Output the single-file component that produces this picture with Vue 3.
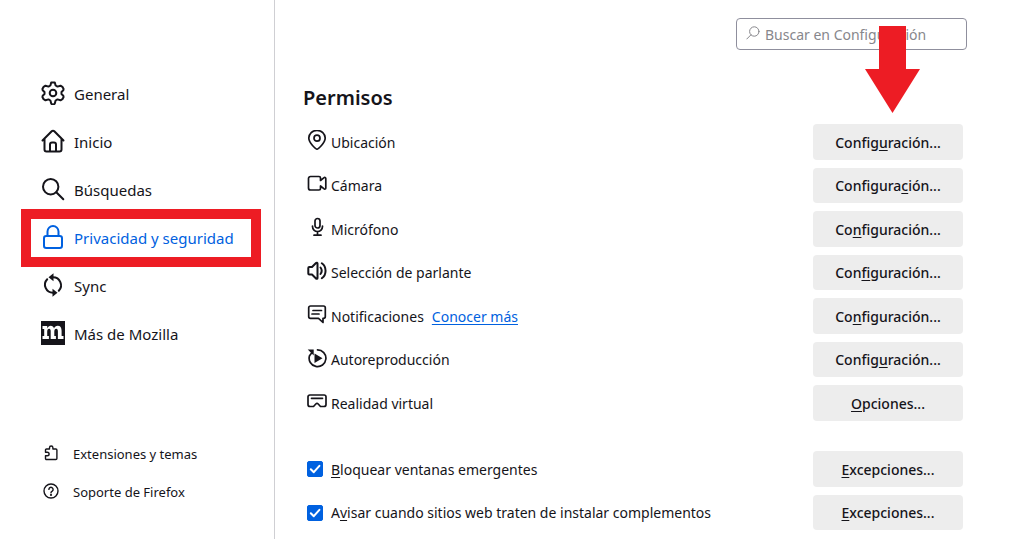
<script setup>
import { ref } from 'vue'

const categories = [
  { id: 'general', label: 'General' },
  { id: 'home', label: 'Inicio' },
  { id: 'search', label: 'Búsquedas' },
  { id: 'privacy', label: 'Privacidad y seguridad' },
  { id: 'sync', label: 'Sync' },
  { id: 'mozilla', label: 'Más de Mozilla' },
]
const selected = ref('privacy')
const query = ref('')

// Each button text is split around its underlined access key.
const permissions = [
  { id: 'location', label: 'Ubicación', button: ['Config', 'u', 'ración...'] },
  { id: 'camera', label: 'Cámara', button: ['Configura', 'c', 'ión...'] },
  { id: 'microphone', label: 'Micrófono', button: ['Co', 'n', 'figuración...'] },
  { id: 'speaker', label: 'Selección de parlante', button: ['Con', 'f', 'iguración...'] },
  { id: 'notifications', label: 'Notificaciones', link: 'Conocer más', button: ['Co', 'n', 'figuración...'] },
  { id: 'autoplay', label: 'Autoreproducción', button: ['Config', 'u', 'ración...'] },
  { id: 'xr', label: 'Realidad virtual', button: ['', 'O', 'pciones...'] },
]

const blockers = ref([
  { id: 'popups', label: ['', 'B', 'loquear ventanas emergentes'], on: true },
  { id: 'addons', label: ['A', 'v', 'isar cuando sitios web traten de instalar complementos'], on: true },
])
</script>

<template>
  <div class="page">
    <aside class="sidebar">
      <nav class="categories" aria-label="Categorías">
        <button
          v-for="c in categories"
          :key="c.id"
          type="button"
          class="category"
          :class="{ selected: selected === c.id }"
          @click="selected = c.id"
        >
          <svg class="category-icon" viewBox="0 0 24 24" aria-hidden="true">
            <g v-if="c.id === 'general'">
              <path d="M10.2 1.5h3.6l.8 3 1.9 1.1 3-.9 1.9 1.1 1.2 2.1-.3 1.4-1.8 1.7v2l1.8 1.7.3 1.4-1.2 2.1-1.9 1.1-3-.9-1.9 1.1-.8 3-1 1h-1.600l-1-1-.8-3-1.900-1.100-3 .9-1.900-1.100-1.200-2.100.3-1.400 1.800-1.700v-2L1.700 9.300l-.3-1.400 1.200-2.100 1.900-1.100 3 .9 1.900-1.100z" />
              <circle cx="12" cy="12" r="3.300" />
            </g>
            <g v-else-if="c.id === 'home'">
              <path d="M1.500 11.500 10.700 2.200a1.800 1.800 0 0 1 2.600 0l9.200 9.300M3.500 10v10.500a2 2 0 0 0 2 2h13a2 2 0 0 0 2-2V10" />
              <path d="M9 22v-6.500a2 2 0 0 1 2-2h2a2 2 0 0 1 2 2V22" />
            </g>
            <g v-else-if="c.id === 'search'">
              <circle cx="9.700" cy="9.700" r="7.700" />
              <path d="m15.300 15.300 7 7" />
            </g>
            <g v-else-if="c.id === 'privacy'">
              <path d="M6.500 11V6.500a5.500 5.500 0 0 1 11 0V11" />
              <rect x="3" y="11" width="18" height="12" rx="2.200" />
            </g>
            <g v-else-if="c.id === 'sync'">
              <path d="M12 4.200a8 8 0 0 1 5.800 13.500M12 19.800A8 8 0 0 1 6.200 6.300" />
              <path class="head" d="M12.500.3v8L7.500 4.300zM11.500 15.700v8l5-4z" />
            </g>
            <g v-else>
              <path class="tile" d="M0 0h24v24H0z" />
              <path class="mark" transform="translate(0 -3.300) scale(1 1.200)" d="M1.500 7h4.700v1.900C7 7.400 8.200 6.700 9.700 6.700c1.700 0 2.800.8 3.300 2.300.7-1.500 2-2.300 3.700-2.300 2.600 0 3.900 1.500 3.900 4.200v4.300h1.900v2.500h-5.600v-6.200c0-1.500-.5-2.200-1.600-2.200-1.300 0-2 .9-2 2.500v3.400h1.600v2.500H9.700v-6.200c0-1.500-.5-2.200-1.500-2.200-1.300 0-2 .9-2 2.500v3.400h1.700v2.500H1.500v-2.500h1.700V9.500H1.500z" />
            </g>
          </svg>
          <span>{{ c.label }}</span>
        </button>
      </nav>

      <footer class="extras">
        <a class="extra" href="#extensiones">
          <svg class="extra-icon" viewBox="0 0 16 16" aria-hidden="true">
            <path d="M2.500 6.500V5a1 1 0 0 1 1-1h3V2.700a1.700 1.700 0 0 1 3.400 0V4h3a1 1 0 0 1 1 1v8.500a1 1 0 0 1-1 1H3.500a1 1 0 0 1-1-1v-2.700h1.800a1.800 1.800 0 0 0 0-3.600H2.500z" />
          </svg>
          <span>Extensiones y temas</span>
        </a>
        <a class="extra" href="#soporte">
          <svg class="extra-icon" viewBox="0 0 16 16" aria-hidden="true">
            <circle cx="8" cy="8" r="7" />
            <path d="M5.900 6.400a2.100 2.100 0 1 1 3.300 1.700C8.400 8.600 8 8.900 8 9.800" />
            <circle class="solid" cx="8" cy="11.900" r=".4" />
          </svg>
          <span>Soporte de Firefox</span>
        </a>
      </footer>
    </aside>

    <main class="content">
      <div class="search-row">
        <label class="search">
          <svg class="search-icon" viewBox="0 0 14 14" aria-hidden="true">
            <circle cx="8.300" cy="5.500" r="4.700" />
            <path d="M4.900 8.900.8 13" />
          </svg>
          <input v-model="query" type="text" placeholder="Buscar en Configuración" aria-label="Buscar en Configuración" />
        </label>
        <svg class="arrow" viewBox="0 0 55 87" aria-hidden="true">
          <path d="M14 0h27v43h14L27.500 87 0 43h14z" />
        </svg>
      </div>

      <h2>Permisos</h2>

      <section class="rows" aria-label="Permisos">
        <div v-for="p in permissions" :key="p.id" class="row">
          <svg class="row-icon" viewBox="0 0 20 20" aria-hidden="true">
            <g v-if="p.id === 'location'">
              <path d="M10 19.200c-1 0-8.200-6.200-8.200-11.100a8.200 7.700 0 0 1 16.400 0c0 4.900-7.200 11.100-8.200 11.100z" />
              <circle cx="10" cy="8.200" r="3" />
            </g>
            <g v-else-if="p.id === 'camera'">
              <path d="M3.500 2.500h8.500A1.500 1.500 0 0 1 13.500 4v2.500l3.300-2.700c.9-.7 2-.3 2 .8v9.300c0 1.100-1.100 1.500-2 .8L13.500 12v2.500A1.500 1.500 0 0 1 12 16H3.500a2 2 0 0 1-2-2V4.500a2 2 0 0 1 2-2z" />
            </g>
            <g v-else-if="p.id === 'microphone'">
              <rect x="8" y="1.500" width="5" height="9.500" rx="2.500" />
              <path d="M5.500 9v.5a5 5 0 0 0 10 0V9M10.500 14.500V18M7 18.200h7" />
            </g>
            <g v-else-if="p.id === 'speaker'" class="heavy">
              <path d="M1.300 7v5.500a1 1 0 0 0 1 1H5l4 4c.6.6 1.500.3 1.500-.6V2.600c0-.9-.9-1.200-1.500-.6L5 6H2.300a1 1 0 0 0-1 1z" />
              <path d="M13.500 6.500c1.500 2 1.500 4.500 0 6.500M14.800 2.200c5 3.500 5 11.600 0 15.100" />
            </g>
            <g v-else-if="p.id === 'notifications'">
              <path d="M3.500 2h13A1.800 1.800 0 0 1 18.300 3.800v8.700a1.800 1.800 0 0 1-1.800 1.800H16v4.200l-4.500-4.200h-8a1.800 1.800 0 0 1-1.800-1.800V3.800A1.800 1.800 0 0 1 3.500 2zM6 6.500h8.500M5 10h7" />
            </g>
            <g v-else-if="p.id === 'autoplay'">
              <path d="M10.500 1.800a8.400 8.400 0 1 1-8 5.900M2.500 7.700 5 4.500" />
              <path class="head" d="M.7 1.500h6v6zM7.500 5.500v9.500l8-4.700z" />
            </g>
            <g v-else>
              <path d="M2.800 4h14.400A1.800 1.800 0 0 1 19 5.800v7.700a2 2 0 0 1-2 2h-3.500L11.200 13a1.700 1.700 0 0 0-2.400 0l-2.300 2.500H3a2 2 0 0 1-2-2V5.800A1.800 1.800 0 0 1 2.800 4zM4.500 7.300h11" />
            </g>
          </svg>
          <span>{{ p.label }}</span>
          <a v-if="p.link" class="learn-more" href="#conocer-mas">{{ p.link }}</a>
          <button type="button" class="action">{{ p.button[0] }}<u>{{ p.button[1] }}</u>{{ p.button[2] }}</button>
        </div>
      </section>

      <section class="rows blockers" aria-label="Bloqueos">
        <div v-for="b in blockers" :key="b.id" class="row">
          <label class="check">
            <span class="box">
              <input v-model="b.on" type="checkbox" />
              <svg v-if="b.on" class="tick" viewBox="0 0 16 16" aria-hidden="true">
                <path d="m3.800 8.200 3 3 5.600-6.400" />
              </svg>
            </span>
            <span class="check-text">{{ b.label[0] }}<u>{{ b.label[1] }}</u>{{ b.label[2] }}</span>
          </label>
          <button type="button" class="action"><u>E</u>xcepciones...</button>
        </div>
      </section>
    </main>
  </div>
</template>

<style>
body {
  margin: 0;
  background: #fff;
}
</style>

<style scoped>
.page {
  display: flex;
  min-height: 100vh;
  box-sizing: border-box;
  color: #15141a;
  font: 14px/20px "Noto Sans", "Open Sans", sans-serif;
}

svg {
  flex: none;
  fill: none;
  stroke: currentColor;
  stroke-linecap: round;
  stroke-linejoin: round;
}

button,
input {
  font: inherit;
  color: inherit;
}

u {
  text-underline-offset: 2px;
  text-decoration-skip-ink: none;
}

.solid {
  fill: currentColor;
}

.head {
  fill: currentColor;
  stroke: none;
}

.sidebar {
  display: flex;
  flex-direction: column;
  flex: none;
  box-sizing: border-box;
  width: 275px;
  padding: 70px 13px 28px 21px;
  border-right: 1px solid #cfcfd3;
}

.categories {
  display: flex;
  flex-direction: column;
}

.category {
  display: flex;
  align-items: center;
  gap: 9px;
  height: 48px;
  padding: 0 20px;
  border: 0;
  background: none;
  font-size: 15px;
  text-align: left;
}

.category.selected {
  height: 58px;
  margin: -5px 0;
  padding: 0 10px;
  border: 10px solid #ed1c24;
  color: #0061e0;
}

.category-icon {
  width: 24px;
  height: 24px;
  margin-bottom: 3px;
  stroke-width: 2;
}

.tile {
  fill: #15141a;
  stroke: none;
}

.mark {
  fill: #fff;
  stroke: none;
}

.extras {
  display: flex;
  flex-direction: column;
  margin-top: auto;
}

.extra {
  display: flex;
  align-items: center;
  gap: 14px;
  height: 38px;
  padding-left: 22px;
  color: inherit;
  font-size: 13px;
  text-decoration: none;
}

.extra-icon {
  width: 16px;
  height: 16px;
  margin-bottom: 2px;
  stroke-width: 1.4;
}

.content {
  flex: 1;
  min-width: 0;
  max-width: 664px;
  padding: 18px 28px 9px;
}

.search-row {
  position: relative;
  display: flex;
  justify-content: flex-end;
}

.search {
  display: flex;
  align-items: center;
  gap: 5px;
  box-sizing: border-box;
  width: 231px;
  height: 32px;
  padding: 0 9px;
  border: 1px solid #8f8f9d;
  border-radius: 4px;
  color: #87878c;
}

.search-icon {
  width: 14px;
  height: 14px;
  margin-bottom: 3px;
}

.search input {
  flex: 1;
  min-width: 0;
  padding: 2px 0 0;
  border: 0;
  outline: 0;
  background: none;
}

.search input::placeholder {
  color: #87878c;
  opacity: 1;
}

.arrow {
  position: absolute;
  top: 8px;
  right: 47px;
  width: 55px;
  height: 87px;
  fill: #ed1c24;
  stroke: none;
}

h2 {
  margin: 34px 0 12px;
  font-size: 20px;
  font-weight: 600;
  line-height: 28px;
}

.rows {
  display: flex;
  flex-direction: column;
  gap: 8px;
  padding: 0 4px;
}

.blockers {
  margin-top: 30px;
}

.row {
  display: flex;
  align-items: center;
  gap: 4px;
  height: 36px;
}

.row:nth-child(even) {
  height: 35px;
}

.row > span,
.learn-more,
.check-text {
  padding-top: 1px;
}

.row-icon {
  width: 20px;
  height: 20px;
  margin-bottom: 4px;
  stroke-width: 1.7;
}

.heavy {
  stroke-width: 2;
}

.learn-more {
  margin-left: 4px;
  color: #0061e0;
  text-underline-offset: 2px;
}

.action {
  width: 150px;
  height: 100%;
  margin-left: auto;
  padding: 1px 8px 0;
  border: 0;
  border-radius: 4px;
  background: #ededed;
  font-weight: 500;
}

.check {
  display: flex;
  align-items: center;
  gap: 8px;
}

.box {
  display: grid;
  width: 16px;
  height: 16px;
}

.box input {
  grid-area: 1 / 1;
  width: 16px;
  height: 16px;
  margin: 0;
  border: 1px solid #8f8f9d;
  border-radius: 2px;
  appearance: none;
}

.box input:checked {
  border-color: #0061e0;
  background: #0061e0;
}

.tick {
  grid-area: 1 / 1;
  z-index: 1;
  stroke: #fff;
  stroke-width: 2;
  pointer-events: none;
}
</style>
